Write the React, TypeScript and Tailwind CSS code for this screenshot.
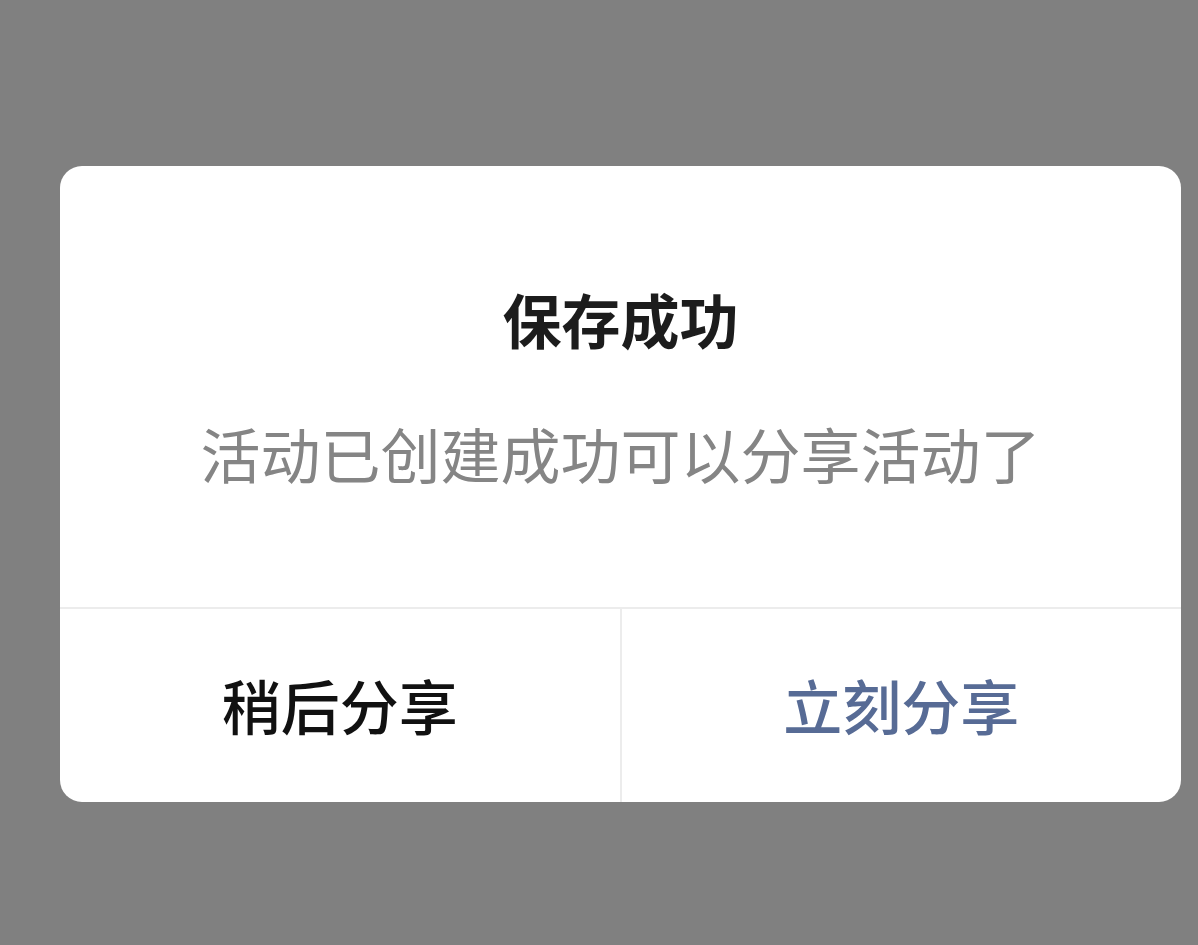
import React from "react";

const font = { fontFamily: '"Noto Sans CJK SC", "Noto Sans", sans-serif' };

export default function App() {
  return (
    <div className="w-[1198px] h-[945px] bg-[#808080] pt-[166px] pl-[60px] overflow-hidden" style={font}>
      <div className="w-[1121px] h-[636px] bg-white rounded-[22px] flex flex-col overflow-hidden">
        <div className="flex flex-col items-center pt-[113px] h-[441px]">
          <div className="text-[59px] leading-[80px] font-bold text-[#1c1c1c]">保存成功</div>
          <div className="mt-[54px] text-[60px] leading-[80px] text-[#858585]">活动已创建成功可以分享活动了</div>
        </div>
        <div className="flex flex-1 border-t-2 border-[#ececec]">
          <div className="flex-1 flex items-center justify-center border-r-2 border-[#ececec] text-[59px] font-medium text-[#111111]">
            稍后分享
          </div>
          <div className="flex-1 flex items-center justify-center text-[59px] font-medium text-[#576b95]">
            立刻分享
          </div>
        </div>
      </div>
    </div>
  );
}
